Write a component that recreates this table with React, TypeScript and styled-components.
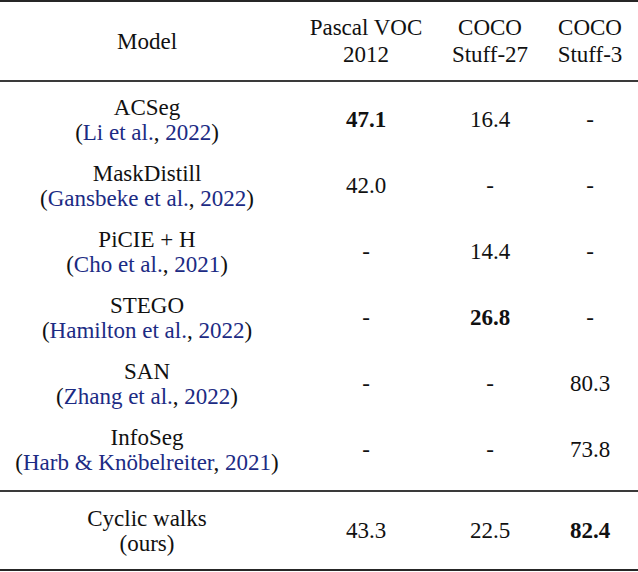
import React from "react";
import styled, { createGlobalStyle } from "styled-components";

const Global = createGlobalStyle`
  html, body { margin: 0; padding: 0; background: #fff; }
`;

const Table = styled.div`
  width: 638px;
  border-top: 2.5px solid #262626;
  border-bottom: 2px solid #262626;
  font-family: "Liberation Serif", "Times New Roman", Times, serif;
  color: #111;
  font-size: 23px;
  line-height: 25px;
`;

const Grid = styled.div<{ $h: number; $pt?: number; $pb?: number; $rule?: boolean; $lh?: number }>`
  display: grid;
  grid-template-columns: 294px 144px 104px 96px;
  grid-auto-rows: ${(p) => p.$h}px;
  padding-top: ${(p) => p.$pt ?? 0}px;
  padding-bottom: ${(p) => p.$pb ?? 0}px;
  line-height: ${(p) => p.$lh ?? 25}px;
  border-bottom: ${(p) => (p.$rule ? "2px solid #3a3a3a" : "none")};
`;

const Cell = styled.div<{ $bold?: boolean }>`
  display: flex;
  flex-direction: column;
  align-items: center;
  justify-content: center;
  text-align: center;
  font-weight: ${(p) => (p.$bold ? 700 : 400)};
  white-space: nowrap;
`;

const Cite = styled.span`
  color: #1c2b84;
`;

type Row = { name: string; author: string; year: string; vals: [string, string, string]; bold?: number };

const rows: Row[] = [
  { name: "ACSeg", author: "Li et al.", year: "2022", vals: ["47.1", "16.4", "-"], bold: 0 },
  { name: "MaskDistill", author: "Gansbeke et al.", year: "2022", vals: ["42.0", "-", "-"] },
  { name: "PiCIE + H", author: "Cho et al.", year: "2021", vals: ["-", "14.4", "-"] },
  { name: "STEGO", author: "Hamilton et al.", year: "2022", vals: ["-", "26.8", "-"], bold: 1 },
  { name: "SAN", author: "Zhang et al.", year: "2022", vals: ["-", "-", "80.3"] },
  { name: "InfoSeg", author: "Harb & Knöbelreiter", year: "2021", vals: ["-", "-", "73.8"] },
];

const ModelCell: React.FC<{ r: Row }> = ({ r }) => (
  <Cell>
    <span>{r.name}</span>
    <span>
      (<Cite>{r.author}</Cite>, <Cite>{r.year}</Cite>)
    </span>
  </Cell>
);

export default function App() {
  return (
    <>
      <Global />
      <Table>
        <Grid $h={75.5} $pt={2} $lh={26.5} $rule>
          <Cell>Model</Cell>
          <Cell>
            <span>Pascal VOC</span>
            <span>2012</span>
          </Cell>
          <Cell>
            <span>COCO</span>
            <span>Stuff-27</span>
          </Cell>
          <Cell>
            <span>COCO</span>
            <span>Stuff-3</span>
          </Cell>
        </Grid>
        <Grid $h={66} $pt={5} $pb={7} $rule>
          {rows.map((r) => (
            <React.Fragment key={r.name}>
              <ModelCell r={r} />
              {r.vals.map((v, i) => (
                <Cell key={i} $bold={r.bold === i}>
                  {v}
                </Cell>
              ))}
            </React.Fragment>
          ))}
        </Grid>
        <Grid $h={75} $pt={2} $lh={25.5}>
          <Cell>
            <span>Cyclic walks</span>
            <span>(ours)</span>
          </Cell>
          <Cell>43.3</Cell>
          <Cell>22.5</Cell>
          <Cell $bold>82.4</Cell>
        </Grid>
      </Table>
    </>
  );
}
